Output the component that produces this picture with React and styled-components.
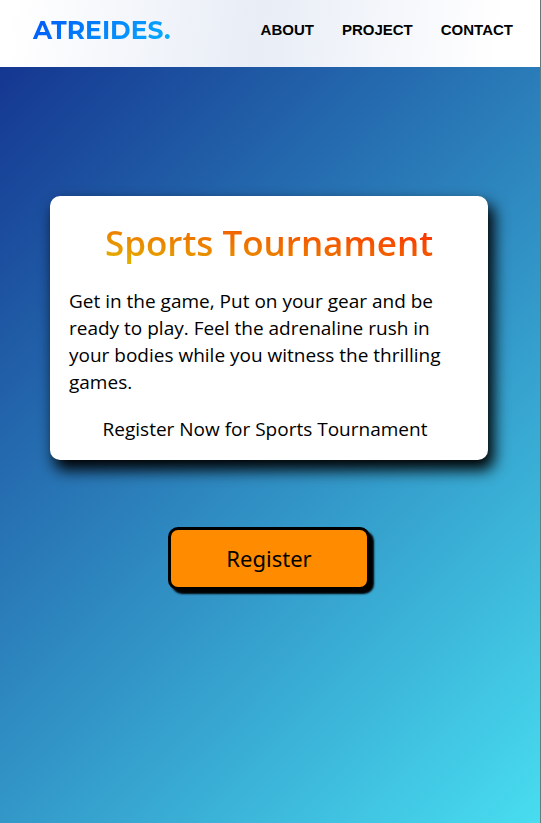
import React from "react";
import styled, { createGlobalStyle } from "styled-components";

const GlobalStyle = createGlobalStyle`
  * { box-sizing: border-box; }
  body { margin: 0; }
`;

const Page = styled.div`
  display: flex;
  flex-direction: column;
  min-height: 100vh;
  border-right: 1px solid #6e7478;
  font-family: "Open Sans", "Noto Sans", sans-serif;
  color: #000;
  background: linear-gradient(135deg, #122e8c, #48ddf0);
`;

const Header = styled.header`
  display: flex;
  align-items: center;
  justify-content: space-between;
  height: 67px;
  padding: 0 27px 7px 33px;
  background: linear-gradient(98deg, #fff 2%, #e8edf6 48%, #fff 92%);
`;

const Logo = styled.a`
  font-family: Montserrat, Inter, sans-serif;
  font-size: 25px;
  line-height: 30px;
  font-weight: 700;
  text-decoration: none;
  color: transparent;
  background: linear-gradient(135deg, #0058f8, #08b0ff);
  background-clip: text;
  -webkit-background-clip: text;
`;

const Nav = styled.nav`
  display: flex;
  gap: 28px;
`;

const NavLink = styled.a`
  font-family: "Liberation Sans", Arial, sans-serif;
  font-size: 15px;
  line-height: 20px;
  font-weight: 700;
  color: #000;
  text-decoration: none;
`;

const Main = styled.main`
  flex: 1;
  display: flex;
  flex-direction: column;
  align-items: center;
  padding: 129px 52px 48px 50px;
`;

const Card = styled.section`
  width: 100%;
  padding: 20px 19px 17px;
  border-radius: 10px;
  background: #fff;
  box-shadow: 5px 9px 15px 1px #000;
`;

const Title = styled.h1`
  width: fit-content;
  margin: 0 auto 18px;
  font-size: 35px;
  line-height: 54px;
  font-weight: 600;
  white-space: nowrap;
  color: transparent;
  background: linear-gradient(to top right, #dfc000, #ff2000 95%);
  background-clip: text;
  -webkit-background-clip: text;
`;

const Text = styled.p`
  margin: 0 0 20px;
  font-size: 19px;
  line-height: 27px;
`;

const Invite = styled(Text)`
  margin: 0;
  padding-right: 8px;
  text-align: center;
`;

const RegisterButton = styled.button`
  width: 202px;
  height: 63px;
  margin-top: 67px;
  padding: 0 0 2px;
  border: 3px solid #000;
  border-radius: 10px;
  background: #ff8c00;
  box-shadow: 4px 4px 2px #000;
  font-family: "Noto Sans", sans-serif;
  font-size: 22px;
  color: #000;
  cursor: pointer;
`;

const links = ["About", "Project", "Contact"];

export default function App() {
  return (
    <Page>
      <GlobalStyle />
      <Header>
        <Logo href="#home">ATREIDES.</Logo>
        <Nav>
          {links.map((name) => (
            <NavLink key={name} href={`#${name.toLowerCase()}`}>{name.toUpperCase()}</NavLink>
          ))}
        </Nav>
      </Header>
      <Main>
        <Card>
          <Title>Sports Tournament</Title>
          <Text>
            Get in the game, Put on your gear and be ready to play. Feel the
            adrenaline rush in your bodies while you witness the thrilling games.
          </Text>
          <Invite>Register Now for Sports Tournament</Invite>
        </Card>
        <RegisterButton type="button">Register</RegisterButton>
      </Main>
    </Page>
  );
}
